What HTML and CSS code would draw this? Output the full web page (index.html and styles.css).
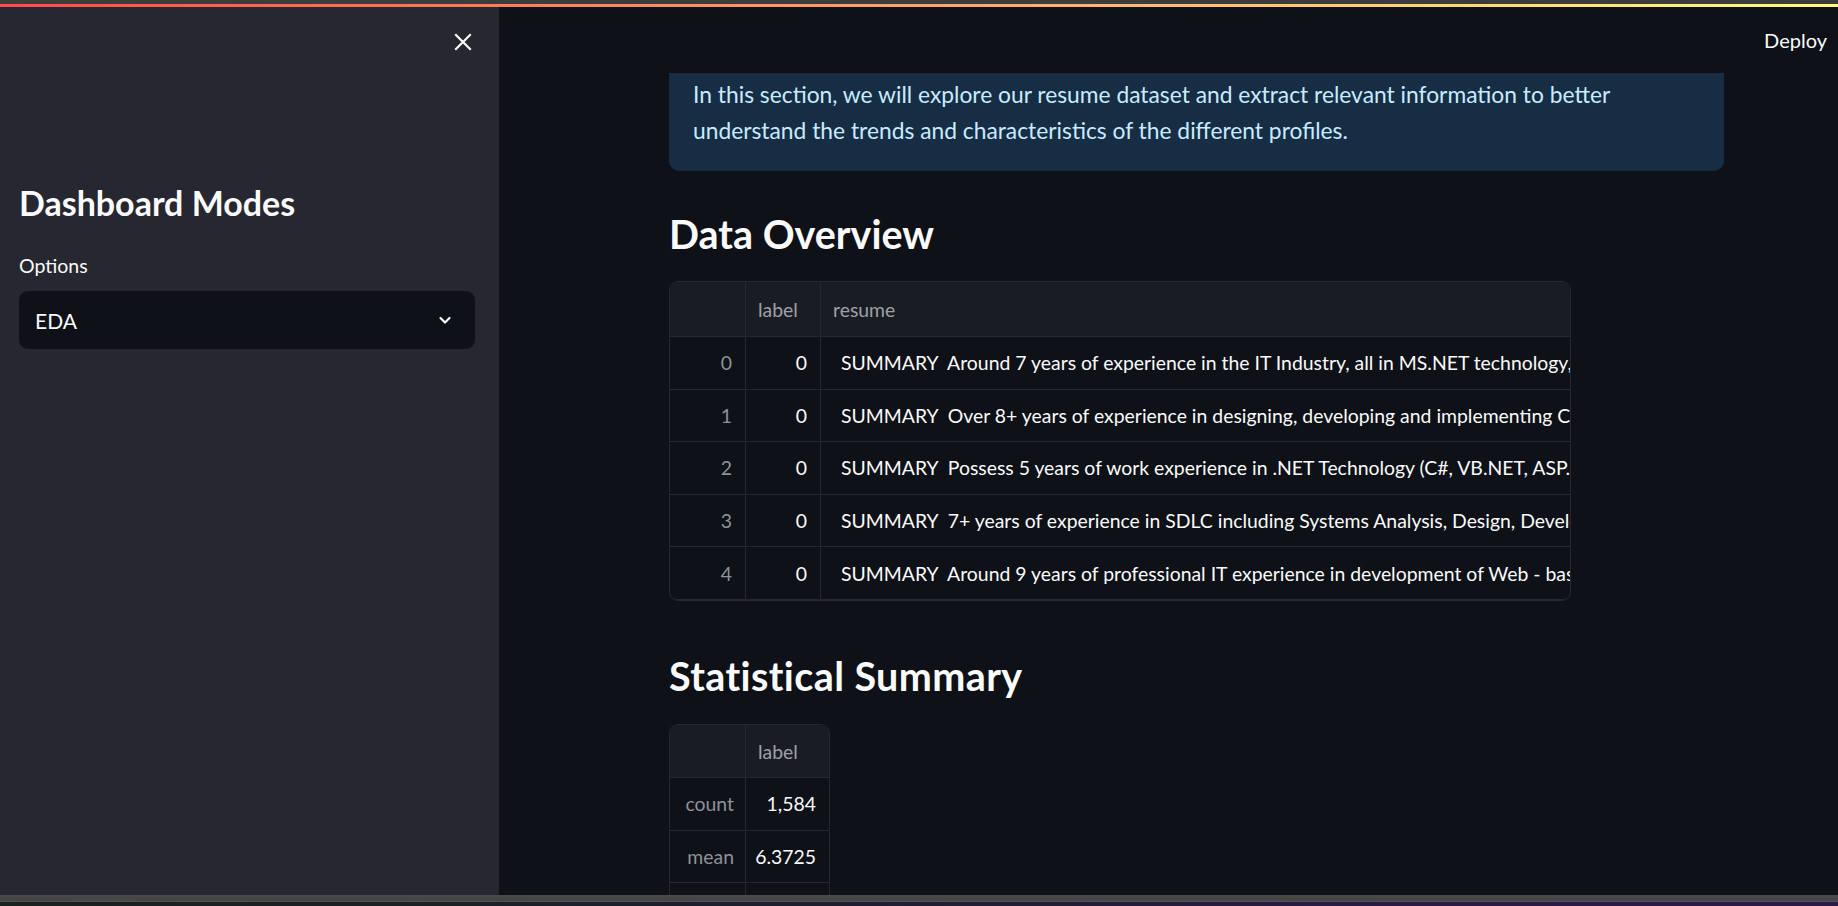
FILE: index.html
```html
<!DOCTYPE html>
<html lang="en">
<head>
<meta charset="utf-8">
<title>Resume EDA</title>
<link rel="stylesheet" href="styles.css">
</head>
<body>
<div class="chrome-top"></div>
<div class="decoration"></div>
<div class="app">
  <aside class="sidebar">
    <div class="sb-top">
      <button class="close" aria-label="Close sidebar">
        <svg width="20" height="20" viewBox="0 0 20 20"><path d="M3 3 L17 17 M17 3 L3 17" stroke="#fafafa" stroke-width="2.2" stroke-linecap="square" fill="none"/></svg>
      </button>
    </div>
    <h2 class="sb-title">Dashboard Modes</h2>
    <div class="sb-label">Options</div>
    <div class="select">
      <span>EDA</span>
      <svg width="16" height="16" viewBox="0 0 16 16"><path d="M3.5 6 L8 10.5 L12.5 6" stroke="#fafafa" stroke-width="2.2" fill="none" stroke-linecap="round" stroke-linejoin="round"/></svg>
    </div>
  </aside>
  <main class="main">
    <header class="header">
      <span class="deploy">Deploy</span>
    </header>
    <div class="content">
      <div class="block">
        <div class="info">In this section, we will explore our resume dataset and extract relevant information to better understand the trends and characteristics of the different profiles.</div>
        <h2 class="h2 h2-first">Data Overview</h2>
        <div class="grid grid-wide">
          <div class="row head">
            <div class="cell idx"></div>
            <div class="cell lab hdr">label</div>
            <div class="cell res hdr">resume</div>
          </div>
          <div class="row">
            <div class="cell idx">0</div>
            <div class="cell lab val">0</div>
            <div class="cell res val"> SUMMARY  Around 7 years of experience in the IT Industry, all in MS.NET technology, including design, development and support</div>
          </div>
          <div class="row">
            <div class="cell idx">1</div>
            <div class="cell lab val">0</div>
            <div class="cell res val"> SUMMARY  Over 8+ years of experience in designing, developing and implementing Client-Server and Web based applications</div>
          </div>
          <div class="row">
            <div class="cell idx">2</div>
            <div class="cell lab val">0</div>
            <div class="cell res val"> SUMMARY  Possess 5 years of work experience in .NET Technology (C#, VB.NET, ASP.NET, ADO.NET, SQL Server)</div>
          </div>
          <div class="row">
            <div class="cell idx">3</div>
            <div class="cell lab val">0</div>
            <div class="cell res val"> SUMMARY  7+ years of experience in SDLC including Systems Analysis, Design, Development, Testing and Implementation</div>
          </div>
          <div class="row">
            <div class="cell idx">4</div>
            <div class="cell lab val">0</div>
            <div class="cell res val"> SUMMARY  Around 9 years of professional IT experience in development of Web - based applications using .NET</div>
          </div>
          <div class="row">
            <div class="cell idx">5</div>
            <div class="cell lab val">0</div>
            <div class="cell res val"> SUMMARY  More than 6 years of experience</div>
          </div>
        </div>
        <h2 class="h2 h2-second">Statistical Summary</h2>
        <div class="grid grid-stats">
          <div class="row head">
            <div class="cell idx"></div>
            <div class="cell lab2 hdr">label</div>
          </div>
          <div class="row">
            <div class="cell idx sidx">count</div>
            <div class="cell lab2 val">1,584</div>
          </div>
          <div class="row">
            <div class="cell idx sidx">mean</div>
            <div class="cell lab2 val">6.3725</div>
          </div>
          <div class="row">
            <div class="cell idx sidx">std</div>
            <div class="cell lab2 val">4.4436</div>
          </div>
        </div>
      </div>
    </div>
  </main>
</div>
<div class="chrome-bottom"></div>
<div class="taskbar"></div>
</body>
</html>
```

FILE: styles.css
```css
* { box-sizing: border-box; }
html, body { margin: 0; padding: 0; }
body {
  width: 1838px;
  height: 906px;
  overflow: hidden;
  background: #0e1117;
  font-family: "Lato", "Noto Sans", sans-serif;
  color: #fafafa;
  display: flex;
  flex-direction: column;
}
.chrome-top { height: 4px; background: #3c3c3c; flex: none; }
.decoration {
  height: 3px;
  flex: none;
  background: linear-gradient(90deg, #ff4b4b, #fffd80);
}
.app { display: flex; height: 888px; flex: none; overflow: hidden; }
.chrome-bottom {
  height: 7px; flex: none;
  background: linear-gradient(#4a4a4a, #444 70%, #555);
}
.taskbar {
  flex: 1;
  background: linear-gradient(90deg, #18221f, #1c1f2c 40%, #2a1a44 75%, #2c1a46);
}

/* Sidebar */
.sidebar {
  width: 499px;
  flex: none;
  background: #262730;
  padding: 0 24px 0 19px;
  display: flex;
  flex-direction: column;
}
.sb-top {
  height: 70px;
  display: flex;
  justify-content: flex-end;
  align-items: center;
}
.close {
  background: none; border: 0; padding: 0; margin-right: 2px;
  width: 20px; height: 20px; display: flex;
}
.sb-title {
  margin: 106px 0 0;
  font-size: 34px;
  line-height: 40px;
  font-weight: 700;
}
.sb-label {
  margin-top: 30px;
  font-size: 19.5px;
  line-height: 26px;
}
.select {
  margin-top: 12px;
  height: 58px;
  background: #0e1117;
  border-radius: 9px;
  display: flex;
  align-items: center;
  justify-content: space-between;
  padding: 0 22px 0 16px;
  font-size: 21px;
}

/* Main */
.main {
  flex: 1;
  display: flex;
  flex-direction: column;
  min-width: 0;
}
.header {
  height: 66px;
  flex: none;
  display: flex;
  justify-content: flex-end;
  align-items: center;
  padding-right: 11px;
}
.deploy { font-size: 20px; }
.content { flex: 1; overflow: hidden; padding-left: 170px; }
.block { width: 1055px; }
.info {
  background: #172d43;
  color: #c7ebff;
  border-radius: 0 0 10px 10px;
  padding: 3px 24px 23px;
  font-size: 22.8px;
  line-height: 36px;
}
.h2 {
  margin: 0;
  font-weight: 700;
  font-size: 39.5px;
  line-height: 48px;
}
.h2-first { margin-top: 39px; }
.h2-second { margin-top: 51px; letter-spacing: 0.4px; }

.grid {
  margin-top: 23px;
  border: 1px solid #26282e;
  border-radius: 9px;
  overflow: hidden;
  font-size: 19.4px;
}
.grid-wide { width: 902px; height: 320px; }
.grid-stats { width: 161px; margin-top: 24px; border-bottom: 0; border-radius: 9px 9px 0 0; }
.row {
  display: flex;
  height: 52.6px;
  border-bottom: 1px solid #26282e;
}
.row.head { height: 55px; background: #1a1c23; }
.grid-stats .row.head { height: 53px; }
.cell {
  display: flex;
  align-items: center;
  padding: 0 12px;
  white-space: pre;
  overflow: hidden;
  border-right: 1px solid #26282e;
  flex: none;
}
.cell:last-child { border-right: 0; }
.idx { width: 76px; justify-content: flex-end; color: #8f929a; padding-right: 13px; }
.sidx { justify-content: flex-end; padding-right: 11px; }
.lab { width: 75px; justify-content: flex-end; padding-right: 13px; }
.lab2 { width: 84px; justify-content: flex-end; padding-right: 14px; }
.hdr { color: #9da0a8; justify-content: flex-start; padding-left: 12px; }
.res { flex: 1; justify-content: flex-start; padding-left: 15px; }
.res.hdr { padding-left: 12px; }
.val { color: #fafafa; }
```
